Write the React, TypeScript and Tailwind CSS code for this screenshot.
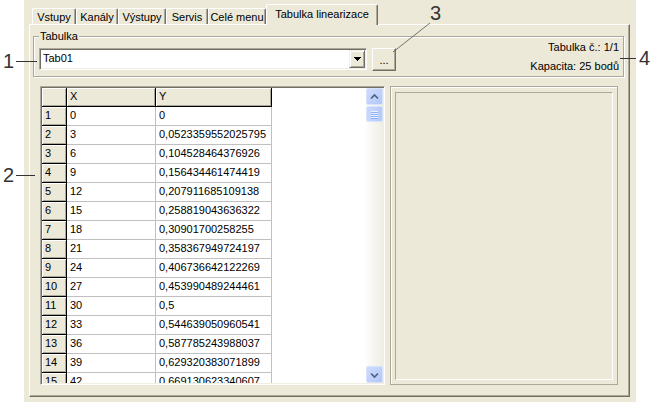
import React from 'react';

const rows: [string, string][] = [
  ['0', '0'],
  ['3', '0,0523359552025795'],
  ['6', '0,104528464376926'],
  ['9', '0,156434461474419'],
  ['12', '0,207911685109138'],
  ['15', '0,258819043636322'],
  ['18', '0,30901700258255'],
  ['21', '0,358367949724197'],
  ['24', '0,406736642122269'],
  ['27', '0,453990489244461'],
  ['30', '0,5'],
  ['33', '0,544639050960541'],
  ['36', '0,587785243988037'],
  ['39', '0,629320383071899'],
  ['42', '0,669130623340607'],
];

const tabs = [
  { label: 'Vstupy', w: 'w-[44px]' },
  { label: 'Kanály', w: 'w-[42px]' },
  { label: 'Výstupy', w: 'w-[48px]' },
  { label: 'Servis', w: 'w-[42px]' },
  { label: 'Celé menu', w: 'w-[58px]' },
];

const TabStrip = () => (
  <div className="flex h-[20px] items-end pl-[3px]">
    {tabs.map((t) => (
      <div
        key={t.label}
        className={`${t.w} h-[16px] rounded-t-[2px] border-l border-r border-t border-l-white border-r-[#716f64] border-t-white pt-[2px] text-center shadow-[inset_-1px_0_0_#aca899]`}
      >
        {t.label}
      </div>
    ))}
    <div className="relative z-10 -mb-px h-[21px] w-[112px] rounded-t-[2px] border-l border-r border-t border-l-white border-r-[#716f64] border-t-white bg-[#ece9d8] pt-[3px] text-center shadow-[inset_-1px_0_0_#aca899]">
      Tabulka linearizace
    </div>
  </div>
);

const Chevron = ({ down }: { down?: boolean }) => (
  <svg width="9" height="6" viewBox="0 0 9 6">
    <path
      d={down ? 'M1 1.5 L4.5 5 L8 1.5' : 'M1 4.5 L4.5 1 L8 4.5'}
      fill="none"
      stroke="#4d6185"
      strokeWidth="1.7"
    />
  </svg>
);

const ScrollButton = ({ down }: { down?: boolean }) => (
  <div className="flex h-[17px] items-center justify-center rounded-[2px] border border-[#d7e2fd] bg-gradient-to-br from-[#cfdcfd] to-[#b2c6f7]">
    <Chevron down={down} />
  </div>
);

const ScrollBar = () => (
  <div className="flex w-[17px] shrink-0 flex-col bg-gradient-to-r from-[#fdfdfa] to-[#eeede5]">
    <ScrollButton />
    <div className="mt-[1px] flex h-[16px] flex-col items-center justify-center gap-[1px] rounded-[2px] border border-[#d7e2fd] bg-gradient-to-r from-[#c9d8fd] to-[#b6c9f8]">
      {[0, 1, 2, 3].map((i) => (
        <div key={i} className="h-px w-[7px] bg-[#eef4fe] shadow-[0_1px_0_#8cb0f8]" />
      ))}
    </div>
    <div className="flex-1" />
    <ScrollButton down />
  </div>
);

const fixedCell =
  'shrink-0 border-b border-r border-black bg-[#ece9d8] pl-[3px] pt-[2px] shadow-[inset_1px_1px_0_#fff,inset_-1px_-1px_0_#aca899]';
const dataCell = 'shrink-0 border-b border-r border-[#c0c0c0] pl-[3px] pt-[2px]';

const Grid = () => (
  <div className="flex h-full w-[345px] border border-b-white border-l-[#aca899] border-r-white border-t-[#aca899] p-px shadow-[inset_1px_1px_0_#716f64,inset_-1px_-1px_0_#f1efe2]">
    <div className="flex-1 overflow-hidden bg-white">
      <div className="flex h-[19px]">
        <div className={`${fixedCell} w-[25px]`} />
        <div className={`${fixedCell} w-[89px]`}>X</div>
        <div className={`${fixedCell} w-[116px]`}>Y</div>
      </div>
      {rows.map(([x, y], i) => (
        <div key={i} className="flex h-[19px]">
          <div className={`${fixedCell} w-[25px]`}>{i + 1}</div>
          <div className={`${dataCell} w-[89px]`}>{x}</div>
          <div className={`${dataCell} w-[116px]`}>{y}</div>
        </div>
      ))}
    </div>
    <ScrollBar />
  </div>
);

const Annotations = () => (
  <>
    <svg className="pointer-events-none absolute left-0 top-0" width="660" height="402">
      <line x1="16" y1="61.5" x2="37" y2="61.5" stroke="#333" strokeWidth="1" />
      <line x1="16" y1="175.5" x2="35" y2="175.5" stroke="#333" strokeWidth="1" />
      <line x1="393" y1="52" x2="430" y2="23" stroke="#555" strokeWidth="0.8" />
      <line x1="620" y1="58.5" x2="636" y2="58.5" stroke="#333" strokeWidth="1" />
    </svg>
    <span className="absolute left-[3px] top-[51px] text-[20px] leading-[20px] text-[#333]">1</span>
    <span className="absolute left-[3px] top-[165px] text-[20px] leading-[20px] text-[#333]">2</span>
    <span className="absolute left-[430px] top-[3px] text-[20px] leading-[20px] text-[#333]">3</span>
    <span className="absolute left-[639px] top-[48px] text-[20px] leading-[20px] text-[#333]">4</span>
  </>
);

export default function App() {
  return (
    <div className="relative flex h-[402px] w-[660px] bg-white font-['Liberation_Sans',Arial,sans-serif] text-[11px] leading-[13px] text-black">
      <div className="w-[24px] shrink-0" />
      <div className="h-full w-[612px] shrink-0 bg-[#ece9d8] pl-[5px] pt-[4px]">
        <TabStrip />
        <div className="flex h-[373px] w-[601px] flex-col border border-b-[#716f64] border-l-white border-r-[#716f64] border-t-white shadow-[inset_-1px_-1px_0_#aca899]">
          {/* Tabulka group */}
          <div className="relative ml-[3px] mt-[11px] flex h-[41px] w-[591px] items-start border border-[#aca899] shadow-[inset_1px_1px_0_#fff,1px_1px_0_#fff]">
            <span className="absolute -top-[7px] left-[5px] bg-[#ece9d8] px-px">Tabulka</span>
            <div className="ml-[5px] mt-[11px] flex h-[22px] w-[328px] border border-b-white border-l-[#aca899] border-r-white border-t-[#aca899] bg-white p-px shadow-[inset_1px_1px_0_#716f64,inset_-1px_-1px_0_#f1efe2]">
              <div className="flex-1 pl-[2px] pt-[2px]">Tab01</div>
              <div className="flex w-[16px] items-center justify-center border border-b-[#716f64] border-l-[#f1efe2] border-r-[#716f64] border-t-[#f1efe2] bg-[#ece9d8] shadow-[inset_1px_1px_0_#fff,inset_-1px_-1px_0_#aca899]">
                <svg width="7" height="4" viewBox="0 0 7 4" shapeRendering="crispEdges">
                  <rect x="0" y="0" width="7" height="1" fill="#000" />
                  <rect x="1" y="1" width="5" height="1" fill="#000" />
                  <rect x="2" y="2" width="3" height="1" fill="#000" />
                  <rect x="3" y="3" width="1" height="1" fill="#000" />
                </svg>
              </div>
            </div>
            <div className="ml-[5px] mt-[11px] flex h-[23px] w-[24px] justify-center border border-b-[#716f64] border-l-white border-r-[#716f64] border-t-white pt-[5px] shadow-[inset_-1px_-1px_0_#aca899]">
              ...
            </div>
            <div className="ml-auto mr-[4px] mt-[4px] flex flex-col items-end gap-[6px]">
              <span>Tabulka č.: 1/1</span>
              <span>Kapacita: 25 bodů</span>
            </div>
          </div>

          {/* grid + preview */}
          <div className="ml-[10px] mt-[9px] flex h-[299px]">
            <Grid />
            <div className="ml-[5px] h-full w-[228px] border border-[#aca899] pl-[4px] pt-[5px] shadow-[inset_1px_1px_0_#fff]">
              <div className="h-[288px] w-[218px] border border-b-white border-l-[#aca899] border-r-white border-t-[#aca899]" />
            </div>
          </div>
        </div>
      </div>
      <div className="flex-1" />
      <Annotations />
    </div>
  );
}
